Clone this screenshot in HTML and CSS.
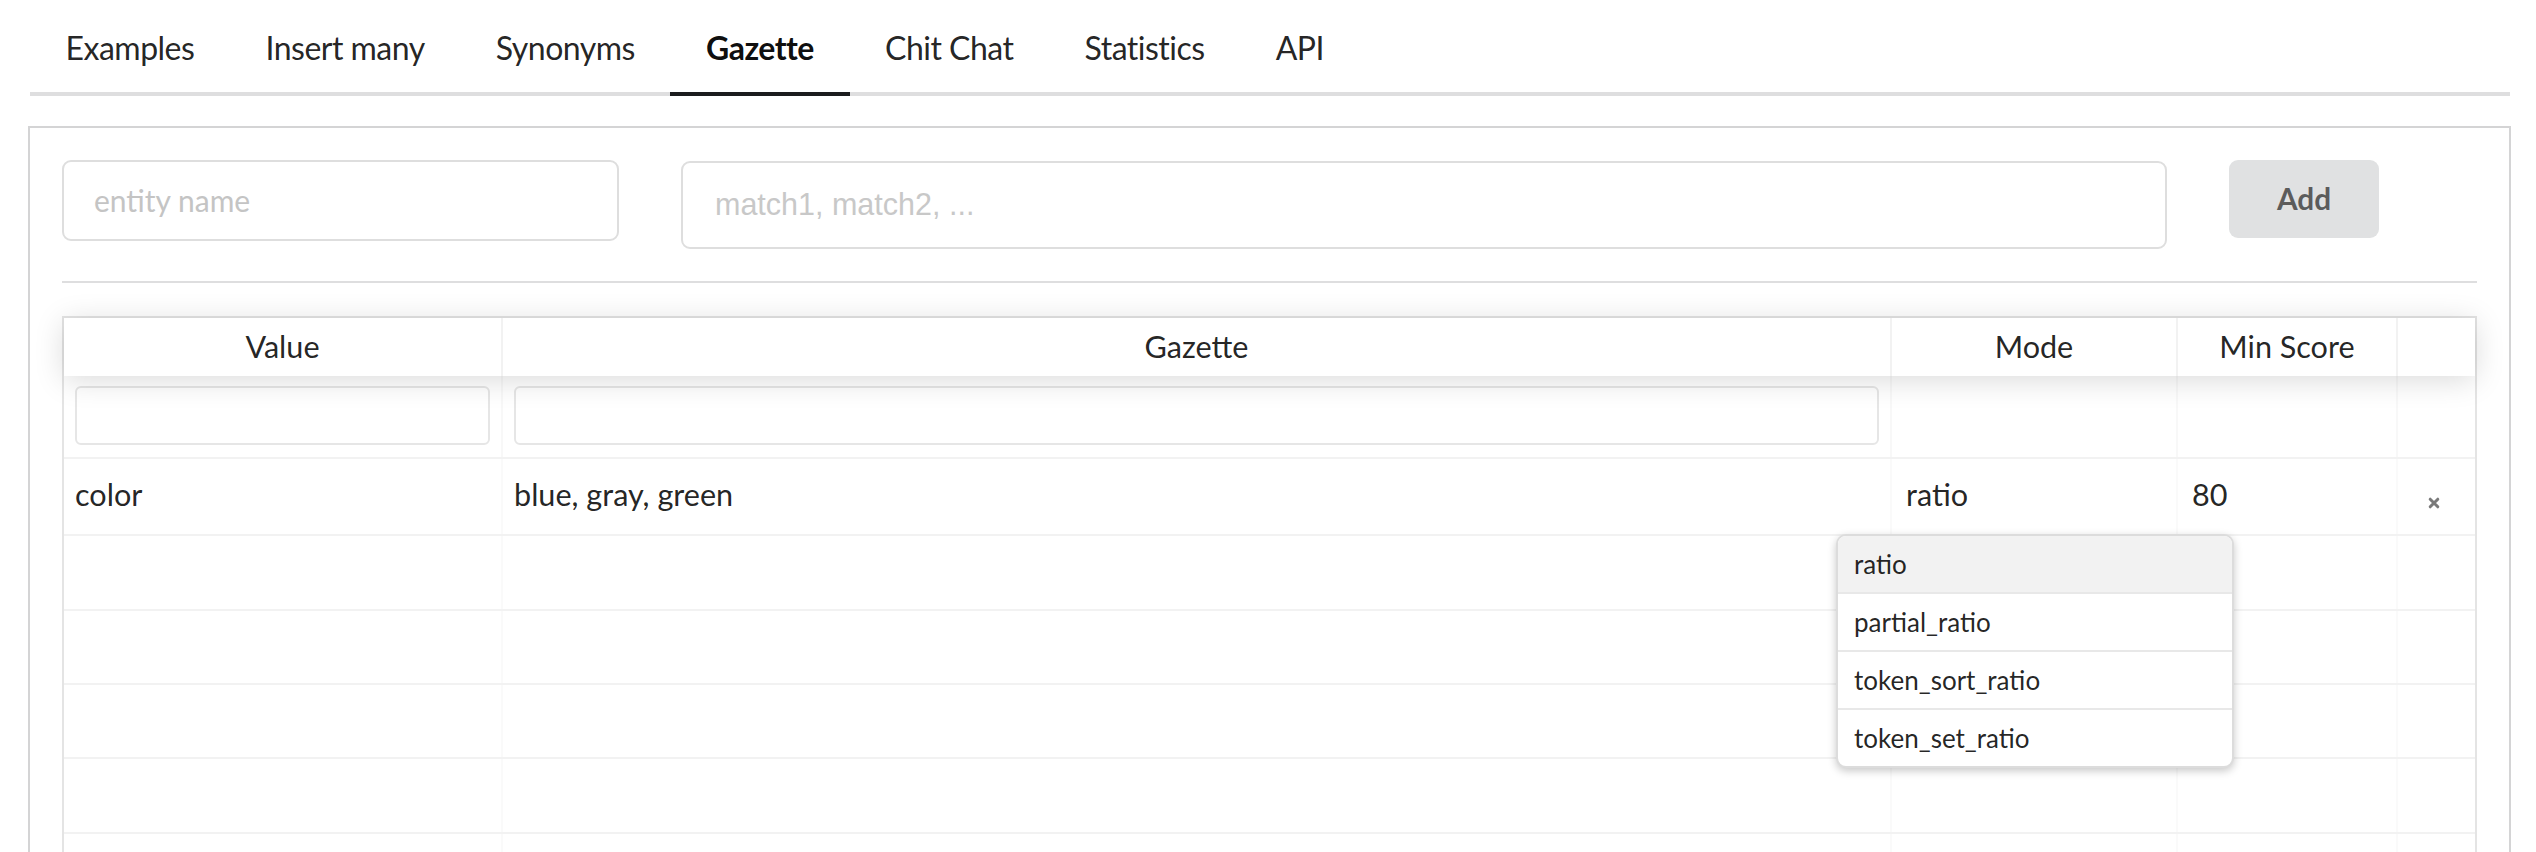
FILE: index.html
```html
<!DOCTYPE html>
<html lang="en">
<head>
<meta charset="utf-8">
<title>Gazette</title>
<link rel="stylesheet" href="styles.css">
</head>
<body>
<div class="page">
  <nav class="tabs">
    <a class="tab">Examples</a>
    <a class="tab">Insert many</a>
    <a class="tab">Synonyms</a>
    <a class="tab active">Gazette</a>
    <a class="tab">Chit Chat</a>
    <a class="tab">Statistics</a>
    <a class="tab">API</a>
  </nav>

  <section class="segment">
    <form class="entry">
      <input class="field entity" type="text" placeholder="entity name">
      <input class="field matches" type="text" placeholder="match1, match2, ...">
      <button class="add" type="button">Add</button>
    </form>

    <div class="divider"></div>

    <div class="table">
      <div class="row head">
        <div class="cell">Value</div>
        <div class="cell">Gazette</div>
        <div class="cell">Mode</div>
        <div class="cell">Min Score</div>
        <div class="cell"></div>
      </div>
      <div class="row filters">
        <div class="cell"><input class="filter" type="text"></div>
        <div class="cell"><input class="filter" type="text"></div>
        <div class="cell"></div>
        <div class="cell"></div>
        <div class="cell"></div>
      </div>
      <div class="row body data">
        <div class="cell">color</div>
        <div class="cell">blue, gray, green</div>
        <div class="cell editable mode">ratio
          <ul class="menu">
            <li class="option selected">ratio</li>
            <li class="option">partial_ratio</li>
            <li class="option">token_sort_ratio</li>
            <li class="option">token_set_ratio</li>
          </ul>
        </div>
        <div class="cell editable">80</div>
        <div class="cell remove">
          <svg class="x" viewBox="0 0 12 12" width="12" height="12" aria-hidden="true">
            <path d="M2.2 2.2 L9.8 9.8 M9.8 2.2 L2.2 9.8" stroke="currentColor" stroke-width="3" stroke-linecap="round"/>
          </svg>
        </div>
      </div>
      <div class="row body"><div class="cell"></div><div class="cell"></div><div class="cell"></div><div class="cell"></div><div class="cell"></div></div>
      <div class="row body"><div class="cell"></div><div class="cell"></div><div class="cell"></div><div class="cell"></div><div class="cell"></div></div>
      <div class="row body"><div class="cell"></div><div class="cell"></div><div class="cell"></div><div class="cell"></div><div class="cell"></div></div>
      <div class="row body"><div class="cell"></div><div class="cell"></div><div class="cell"></div><div class="cell"></div><div class="cell"></div></div>
      <div class="row body"><div class="cell"></div><div class="cell"></div><div class="cell"></div><div class="cell"></div><div class="cell"></div></div>
    </div>
  </section>
</div>
</body>
</html>
```

FILE: styles.css
```css
* { box-sizing: border-box; }

html, body {
  margin: 0;
  padding: 0;
  background: #ffffff;
}

body {
  font-family: Lato, "Noto Sans", sans-serif;
  color: rgba(0, 0, 0, 0.87);
  height: 852px;
  overflow: hidden;
}

.page {
  padding: 5px 25px 0 28px;
}

/* ---------- tabs ---------- */
.tabs {
  display: flex;
  margin-left: 2px;
  margin-right: 1px;
  border-bottom: 4px solid #dededf;
}

.tab {
  display: block;
  font-size: 32px;
  letter-spacing: -0.52px;
  line-height: 1;
  padding: 27.4px 35.6px;
  margin-bottom: -4px;
  border-bottom: 4px solid transparent;
  color: rgba(0, 0, 0, 0.87);
  cursor: pointer;
}

.tab.active {
  font-weight: 700;
  color: rgba(0, 0, 0, 0.95);
  border-bottom-color: #1b1c1d;
}

/* ---------- segment ---------- */
.segment {
  margin-top: 30px;
  border: 2px solid #d4d4d5;
  border-bottom: 0;
  padding: 32px 32px 0 32px;
  min-height: 800px;
}

.entry {
  display: grid;
  grid-template-columns: 557px 1486px 150px;
  column-gap: 62px;
  align-items: start;
  margin: 0;
}

.field {
  display: block;
  width: 100%;
  border: 2px solid #dedede;
  border-radius: 9px;
  background: #ffffff;
  outline: none;
  color: rgba(0, 0, 0, 0.87);
  margin: 0;
}

.entity {
  height: 81px;
  font-family: Lato, sans-serif;
  font-size: 30px;
  padding: 0 30px;
}

.entity::placeholder {
  color: #c4c4c4;
}

.matches {
  height: 88px;
  margin-top: 1px;
  font-family: "Liberation Sans", Arial, sans-serif;
  font-size: 30.5px;
  padding: 0 32px;
}

.matches::placeholder {
  color: #c8c8c8;
}

.add {
  display: block;
  height: 78px;
  width: 150px;
  border: 0;
  border-radius: 9px;
  background: #e0e1e2;
  color: rgba(0, 0, 0, 0.6);
  font-family: Lato, sans-serif;
  font-weight: 700;
  font-size: 29.8px;
  line-height: 1;
  padding: 0;
  cursor: pointer;
}

.divider {
  height: 2px;
  background: #dededf;
  margin-top: 32px;
  margin-bottom: 33px;
}

/* ---------- table ---------- */
.table {
  border: 2px solid #e4e4e4;
  border-bottom: 0;
  font-size: 30.6px;
}

.row {
  display: grid;
  grid-template-columns: 439px 1389px 286px 220px 1fr;
}

.cell {
  border-right: 2px solid #fafafa;
  padding: 15px 11px;
  line-height: 42.5px;
  white-space: nowrap;
}

.cell:last-child {
  border-right: 0;
}

.head {
  position: relative;
  z-index: 2;
  box-shadow: 0 4px 30px 0 rgba(0, 0, 0, 0.15);
  background: #ffffff;
}

.head .cell {
  text-align: center;
  padding: 11px 11px;
  height: 58px;
  line-height: 36px;
  border-right-color: #f2f2f2;
}

.filters {
  border-bottom: 2px solid #f2f2f2;
}

.filters .cell {
  padding: 10.6px 11px;
  height: 81px;
  border-right-color: #f8f8f8;
}

.filter {
  display: block;
  width: 100%;
  height: 59px;
  margin: 0;
  border: 2px solid #e6e6e6;
  border-radius: 6px;
  background: #ffffff;
  outline: none;
  font-size: 29.8px;
}

.body {
  border-bottom: 2px solid #f2f2f2;
}

.body .cell {
  height: 72.4px;
  padding-top: 14px;
  padding-bottom: 14px;
}

.data .cell {
  height: 75.5px;
  padding-top: 15px;
}

.editable {
  padding-left: 14px;
}

.mode {
  position: relative;
}

.data .remove {
  display: flex;
  align-items: center;
  justify-content: center;
  padding-top: 22px;
  padding-bottom: 10px;
  padding-right: 16px;
  color: #7a7a7a;
}

.x {
  width: 12px;
  height: 12px;
}

/* ---------- dropdown menu ---------- */
.menu {
  position: absolute;
  z-index: 5;
  left: -56px;
  top: 75px;
  width: 398px;
  margin: 0;
  padding: 0;
  list-style: none;
  background: #ffffff;
  border: 2px solid #dcdcdc;
  border-radius: 10px;
  box-shadow: 0 3px 8px rgba(0, 0, 0, 0.22);
  overflow: hidden;
}

.option {
  font-size: 26px;
  line-height: 56px;
  height: 58px;
  padding: 0 16px;
  border-bottom: 2px solid #e8e8e8;
  color: rgba(0, 0, 0, 0.87);
}

.option:last-child {
  border-bottom: 0;
  height: 56px;
}

.option.selected {
  background: #f2f2f2;
}
```
